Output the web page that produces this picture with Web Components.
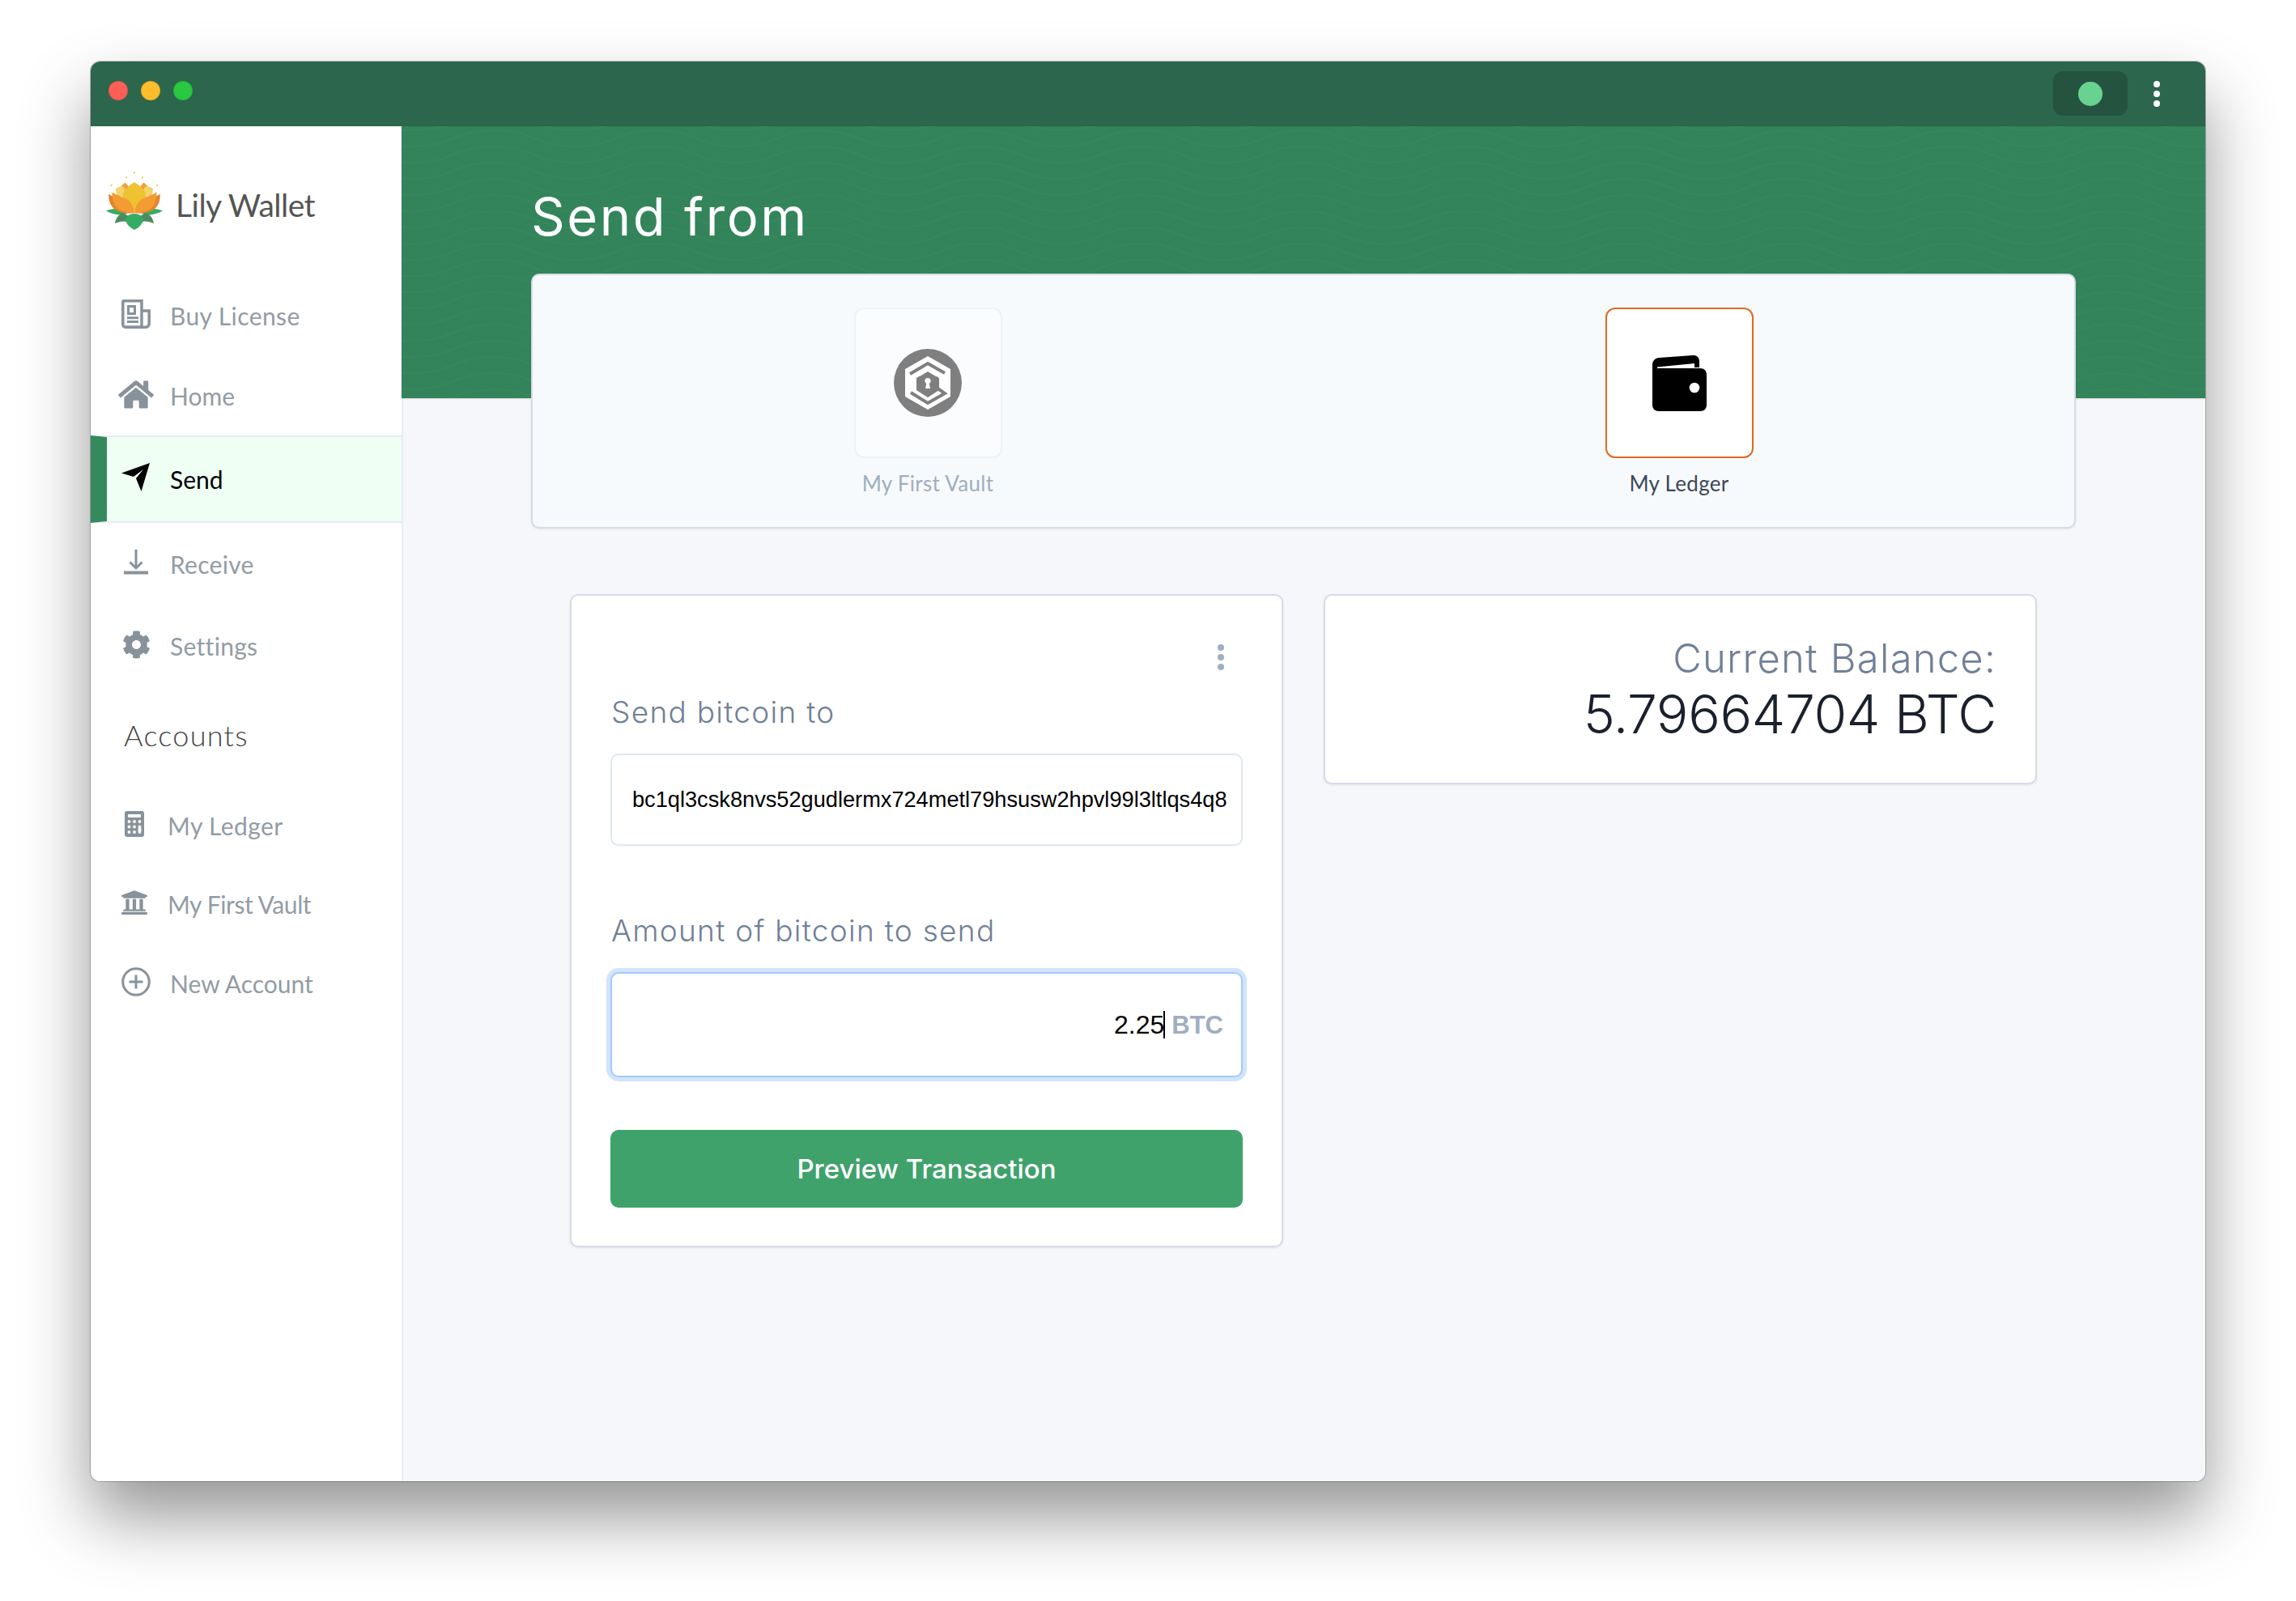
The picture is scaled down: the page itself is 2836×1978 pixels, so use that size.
<!DOCTYPE html>
<html lang="en"><head><meta charset="utf-8"><title>Lily Wallet</title>
<style>
html,body{margin:0;padding:0;background:#fff}
body{width:2836px;height:1978px;overflow:hidden;font-family:"Lato","Noto Sans",sans-serif}
svg{display:block}
</style></head><body>

<lw-window>
  <lw-sidebar slot="side">
    <lw-logo></lw-logo>
    <lw-nav-item h="100" ls=".4"><svg slot="icon" width="36" height="36" viewBox="0 0 36 36" fill="none" stroke="#87929b" stroke-width="3.500"><path d="M3 1.800H25V34.200H5A3.200 3.200 0 0 1 1.800 31V3A1.200 1.200 0 0 1 3 1.800Z"/><path d="M25 14H34.200V30A4.200 4.200 0 0 1 30 34.200H5"/><rect x="8.500" y="8.500" width="8" height="9" stroke-width="3"/><path d="M7 22.800H21M7 27.500H21" stroke-width="3"/></svg>Buy License</lw-nav-item>
    <lw-nav-item h="98"><svg slot="icon" width="44" height="39" viewBox="0 0 576 512" fill="#87929b" style="margin-left:-4px;margin-right:-4px"><path d="M280.370 148.260L96 300.110V464a16 16 0 0 0 16 16l112.060-.29a16 16 0 0 0 15.920-16V368a16 16 0 0 1 16-16h64a16 16 0 0 1 16 16v95.640a16 16 0 0 0 16 16.050L464 480a16 16 0 0 0 16-16V300L295.670 148.260a12.190 12.190 0 0 0-15.300 0zM571.600 251.470L488 182.560V44.050a12 12 0 0 0-12-12h-56a12 12 0 0 0-12 12v72.610L318.470 43a48 48 0 0 0-61 0L4.340 251.470a12 12 0 0 0-1.600 16.900l25.500 31A12 12 0 0 0 45.150 301l235.220-193.740a12.190 12.190 0 0 1 15.300 0L530.900 301a12 12 0 0 0 16.900-1.600l25.500-31a12 12 0 0 0-1.700-16.930z"/></svg>Home</lw-nav-item>
    <lw-nav-item h="108" active><svg slot="icon" width="36" height="36" viewBox="0 0 36 36" fill="#000" style="margin-left:-1px"><path d="M0 12.500L35 0L24.500 35L18 19L27 8L15 17Z"/></svg>Send</lw-nav-item>
    <lw-nav-item h="102" ls=".3"><svg slot="icon" width="36" height="32" viewBox="0 0 36 32" fill="none" stroke="#87929b" stroke-width="3"><path d="M18 0V22M10.500 15.500L18 23L25.500 15.500"/><path d="M3 28.500H33" stroke-width="4"/></svg>Receive</lw-nav-item>
    <lw-nav-item h="100" ls=".3"><svg slot="icon" width="35" height="35" viewBox="0 0 512 512" fill="#87929b"><path d="M487.400 315.700l-42.600-24.600c4.300-23.200 4.300-47 0-70.200l42.600-24.600c4.900-2.800 7.100-8.600 5.500-14-11.100-35.600-30-67.800-54.700-94.600-3.800-4.100-10-5.100-14.800-2.300L380.800 110c-17.900-15.400-38.500-27.300-60.800-35.100V25.800c0-5.600-3.900-10.500-9.400-11.700-36.700-8.200-74.300-7.800-109.200 0-5.500 1.200-9.400 6.100-9.400 11.700V75c-22.200 7.900-42.800 19.800-60.800 35.100L88.700 85.500c-4.900-2.800-11-1.900-14.800 2.300-24.700 26.700-43.600 58.900-54.700 94.600-1.700 5.400.6 11.200 5.500 14L67.300 221c-4.300 23.200-4.300 47 0 70.200l-42.600 24.600c-4.900 2.800-7.100 8.600-5.500 14 11.100 35.600 30 67.800 54.700 94.600 3.800 4.100 10 5.100 14.800 2.300l42.600-24.600c17.900 15.400 38.500 27.300 60.800 35.100v49.200c0 5.600 3.900 10.500 9.400 11.700 36.700 8.200 74.300 7.800 109.200 0 5.500-1.200 9.400-6.100 9.400-11.700v-49.200c22.200-7.900 42.800-19.800 60.800-35.100l42.600 24.600c4.900 2.800 11 1.900 14.800-2.300 24.700-26.700 43.600-58.900 54.700-94.600 1.500-5.500-.7-11.300-5.600-14.100zM256 336c-44.100 0-80-35.900-80-80s35.900-80 80-80 80 35.900 80 80-35.900 80-80 80z"/></svg>Settings</lw-nav-item>
    <lw-nav-heading>Accounts</lw-nav-heading>
    <lw-nav-item h="96" w="32" g="25" ls=".4"><svg slot="icon" width="32" height="32" viewBox="0 0 32 32" fill="#87929b"><rect x="4" y="0" width="24" height="32" rx="3"/><g fill="#fff"><rect x="8" y="4" width="16" height="4" rx="1"/><circle cx="9.500" cy="13" r="1.900"/><circle cx="16" cy="13" r="1.900"/><circle cx="22.500" cy="13" r="1.900"/><circle cx="9.500" cy="19.500" r="1.900"/><circle cx="16" cy="19.500" r="1.900"/><circle cx="9.500" cy="26" r="1.900"/><circle cx="16" cy="26" r="1.900"/><rect x="20.600" y="17.500" width="3.800" height="10.500" rx="1.900"/></g></svg>My Ledger</lw-nav-item>
    <lw-nav-item h="98" w="32" g="25" ls="-.4"><svg slot="icon" width="34" height="34" viewBox="0 0 512 512" fill="#87929b" style="margin-left:-1px;margin-right:-1px"><path d="M496 128v16a8 8 0 0 1-8 8h-24v12c0 6.627-5.373 12-12 12H60c-6.627 0-12-5.373-12-12v-12H24a8 8 0 0 1-8-8v-16a8 8 0 0 1 4.941-7.392l232-88a7.996 7.996 0 0 1 6.118 0l232 88A8 8 0 0 1 496 128zm-24 304H40c-13.255 0-24 10.745-24 24v16a8 8 0 0 0 8 8h464a8 8 0 0 0 8-8v-16c0-13.255-10.745-24-24-24zM96 192v192H60c-6.627 0-12 5.373-12 12v20h416v-20c0-6.627-5.373-12-12-12h-36V192h-64v192h-64V192h-64v192h-64V192H96z"/></svg>My First Vault</lw-nav-item>
    <lw-nav-item h="98"><svg slot="icon" width="36" height="36" viewBox="0 0 36 36" fill="none" stroke="#87929b" stroke-width="3"><circle cx="18" cy="18" r="16.300"/><path d="M18 9.500V26.500M9.500 18H26.500"/></svg>New Account</lw-nav-item>
  </lw-sidebar>

  <lw-band heading="Send from">
    <lw-picker>
      <lw-tile label="My First Vault"><svg width="84" height="84" viewBox="8 8 84 84"><circle cx="50" cy="50" r="42" fill="#7f7f7f"/><path d="M50 17L78 33V67L50 83L22 67V33Z" fill="#fff"/><g fill="none" stroke="#7f7f7f" stroke-width="4"><path d="M28 39L50 26L71 38"/><path d="M29 62L50 75L71 63L58 54"/></g><path d="M36 44L50 35L64 44V59L50 68L36 59Z" fill="#7f7f7f"/><path d="M33 41L50 31L66 41L60 42L50 36L40 42Z" fill="#fff"/><circle cx="50" cy="47.500" r="3.600" fill="#fff"/><path d="M48.700 49H51.300L53 57H47Z" fill="#fff"/></svg></lw-tile>
      <lw-tile label="My Ledger" active><svg width="67" height="69" viewBox="0 0 67 69"><path fill="#000" d="M0 12C0 6 4 3.500 8 3L50 0C55-.4 58 3 58 7V15H52V10L6 14.500V16H59C64 16 67 19 67 24V61C67 66 64 69 59 69H8C3 69 0 66 0 61Z"/><circle cx="52" cy="40" r="6.300" fill="#fff"/></svg></lw-tile>
    </lw-picker>
  </lw-band>

  <lw-content>
    <lw-card class="form">
      <lw-kebab></lw-kebab>
      <lw-field label="Send bitcoin to"><lw-input kind="address">bc1ql3csk8nvs52gudlermx724metl79hsusw2hpvl99l3ltlqs4q8</lw-input></lw-field>
      <lw-field label="Amount of bitcoin to send" second><lw-input kind="amount" unit="BTC">2.25</lw-input></lw-field>
      <lw-button>Preview Transaction</lw-button>
    </lw-card>
    <lw-balance label="Current Balance:" value="5.79664704 BTC"></lw-balance>
  </lw-content>
</lw-window>

<script>
function def(name, css, html){
  customElements.define(name, class extends HTMLElement{
    constructor(){super();const r=this.attachShadow({mode:'open'});
      r.innerHTML='<style>'+css+'</style>'+(typeof html==='function'?html(this):html);}
  });
}
const WAVE = "data:image/svg+xml;utf8,"+encodeURIComponent('<svg xmlns="http://www.w3.org/2000/svg" width="200" height="20"><g fill="none" stroke="#36885c" stroke-width="2"><path d="M-86 5C-36 5-36 25 14 25C64 25 64 5 114 5C164 5 164 25 214 25"/><path d="M-86 -15C-36 -15-36 5 14 5C64 5 64 -15 114 -15C164 -15 164 5 214 5"/></g></svg>');
const TITLE='"Inter","Noto Sans",sans-serif';
const BODY='"Lato","Noto Sans",sans-serif';
const ARIAL='"Liberation Sans",Arial,sans-serif';

def('lw-window',`
:host{display:flex;flex-direction:column;box-sizing:border-box;width:2612px;height:1754px;margin:76px 0 0 112px;border-radius:12px;overflow:hidden;background:#fff;box-shadow:0 0 0 1px rgba(0,0,0,.22),0 44px 84px rgba(0,0,0,.42)}
.bar{flex:none;height:80px;background:#2c664d;display:flex;align-items:center;padding:0 56px 0 22px}
.lights{display:flex;gap:16px;margin-bottom:8px}
.l{width:24px;height:24px;border-radius:50%;box-sizing:border-box;border:1px solid rgba(0,0,0,.1)}
.sp{flex:1}
.pill{width:92px;height:55px;border-radius:12px;background:#24543f;display:flex;align-items:center;justify-content:center;margin-top:-1px}
.pill i{width:30px;height:30px;border-radius:50%;background:#68d391}
.dots{margin-left:32px;width:8px;display:flex;flex-direction:column;gap:4px}
.dots i{width:8px;height:8px;border-radius:50%;background:#fff}
.body{flex:1;display:flex;min-height:0}
.side{flex:none;width:384px}
.main{flex:1;min-width:0;background:linear-gradient(to right,#e8ebf3 2px,#f5f7fb 2px)}
`,`<div class="bar"><div class="lights"><span class="l" style="background:#ff5f57"></span><span class="l" style="background:#ffbd2e"></span><span class="l" style="background:#28c940"></span></div><div class="sp"></div><div class="pill"><i></i></div><div class="dots"><i></i><i></i><i></i></div></div>
<div class="body"><div class="side"><slot name="side"></slot></div><div class="main"><slot></slot></div></div>`);

def('lw-sidebar',`:host{display:block;background:#fff;height:100%}`,`<slot></slot>`);

def('lw-logo',`
:host{display:flex;align-items:center;height:184px;box-sizing:border-box;padding:0 0 0 18px;gap:15px}
span{font:400 39px/1 ${BODY};color:#555;letter-spacing:-.5px;margin-top:10px}
`,`<svg width="72" height="72" viewBox="0 0 72 72">
<g fill="#f0c040"><circle cx="36" cy="1.500" r="1.100"/><circle cx="26" cy="7.300" r="1.100"/><circle cx="45.800" cy="7.300" r="1.100"/><circle cx="7.700" cy="17" r="1.100"/><circle cx="64" cy="17" r="1.100"/></g>
<g><path d="M1 48.500C8 46 14 45 20 46.500L27 52C18 55 9 53 1 48.500Z" fill="#33ad63"/><path d="M12 64C13 58 16 53 22 51L29 55L26.500 62C21 61 17 62 12 64Z" fill="#4f8a60"/>
<path d="M19.500 18L24.500 13.500L31 21L23 25Z" fill="#f2a03a"/><path d="M13 21C17 18 20 18 23 19L27 27L16 32C14 28 13 25 13 21Z" fill="#f3d36a"/></g>
<g transform="matrix(-1 0 0 1 72 0)"><path d="M1 48.500C8 46 14 45 20 46.500L27 52C18 55 9 53 1 48.500Z" fill="#33ad63"/><path d="M12 64C13 58 16 53 22 51L29 55L26.500 62C21 61 17 62 12 64Z" fill="#4f8a60"/>
<path d="M19.500 18L24.500 13.500L31 21L23 25Z" fill="#f2a03a"/><path d="M13 21C17 18 20 18 23 19L27 27L16 32C14 28 13 25 13 21Z" fill="#f3d36a"/></g>
<path d="M36 13C44 18 51 24 51 33C51 42 43 47 36 51C29 47 21 42 21 33C21 24 28 18 36 13Z" fill="#efc232"/>
<path d="M4.300 28C9 30 13 33 14 36C20 38 30 44 36 51C26 53 14 50 9 44C5 39 4 33 4.300 28Z" fill="#e5842c"/>
<path d="M67.700 28C63 30 59 33 58 36C52 38 42 44 36 51C46 53 58 50 63 44C67 39 68 33 67.700 28Z" fill="#e5842c"/>
<path d="M8.300 25.500C15 29 21 31 27 34C32 37 35 44 36 51C29 51 20 50 15 45C10 40 8.500 32 8.300 25.500Z" fill="#f39c34"/>
<path d="M63.700 25.500C57 29 51 31 45 34C40 37 37 44 36 51C43 51 52 50 57 45C62 40 63.500 32 63.700 25.500Z" fill="#f39c34"/>
<path d="M36 72C30 69 25 64 25 58C27 54 32 52 36 52C40 52 45 54 47 58C47 64 42 69 36 72Z" fill="#33ad63"/>
</svg><span>Lily Wallet</span>`);

def('lw-nav-item',`
:host{display:flex;box-sizing:border-box;align-items:center;padding-left:38px;font:400 30px/1 ${BODY};color:#929ca5}
:host([active]){color:#000;background:#f0fff4;border-top:2px solid #e8ebf3;border-bottom:2px solid #e8ebf3;border-left:20px solid #348a5c;padding-left:18px}
.i{flex:none;display:flex;justify-content:center;align-items:center;margin-top:-4px}
span{margin-top:-1px}
`,el=>{const w=el.getAttribute('w')||36,g=el.getAttribute('g')||24;
 el.style.height=(el.getAttribute('h')||100)+'px';
 if(el.getAttribute('ls')) el.style.letterSpacing=el.getAttribute('ls')+'px';
 return `<div class="i" style="width:${w}px;margin-right:${g}px"><slot name="icon"></slot></div><span><slot></slot></span>`});

def('lw-nav-heading',`:host{display:flex;align-items:center;height:120px;margin-bottom:4px;padding-left:41px;font:300 36px/1 ${BODY};color:#444;letter-spacing:1.3px}`,`<slot></slot>`);

def('lw-band',`
:host{display:flow-root;box-sizing:border-box;padding:0 160px;background-color:#33845a;background-image:url('${WAVE}');box-shadow:0 1px 2px rgba(0,0,0,.1)}
h1{margin:0;height:182px;box-sizing:border-box;padding-top:71px;font:400 65px/1.25 ${TITLE};color:#fff;letter-spacing:2.6px}
`,el=>`<h1>${el.getAttribute('heading')}</h1><slot></slot>`);

def('lw-picker',`
:host{display:grid;grid-template-columns:1fr 1fr;box-sizing:border-box;height:315px;margin-bottom:-161px;padding:0 24px;background:#f7fafc;border:2px solid #d5dce6;border-radius:10px;box-shadow:0 1px 3px rgba(0,0,0,.08)}
`,`<slot></slot>`);

def('lw-tile',`
:host{display:flex;flex-direction:column;align-items:center;padding-top:40px}
.t{box-sizing:border-box;width:183px;height:186px;border:2px solid #eff2f6;border-radius:12px;background:#fbfcfe;display:flex;align-items:center;justify-content:center}
:host([active]) .t{background:#fff;border-color:#dd6b20}
.n{margin-top:16px;font:400 26px/30px ${BODY};letter-spacing:.3px;color:#a0aec0}
:host([active]) .n{color:#3d4758}
`,el=>`<div class="t"><slot></slot></div><div class="n">${el.getAttribute('label')}</div>`);

def('lw-content',`:host{display:flex;gap:50px;align-items:flex-start;padding:242px 0 0 208px}
`,`<slot></slot>`);

def('lw-card',`
:host{display:block;box-sizing:border-box;width:881px;height:807px;padding:0 48px;background:#fff;border:2px solid #d5dce6;border-radius:10px;box-shadow:0 1px 3px rgba(0,0,0,.08)}
`,`<slot></slot>`);

def('lw-kebab',`
:host{display:flex;flex-direction:column;align-items:flex-end;gap:4px;padding:60px 23px 0 0;height:32px}
i{width:8px;height:8px;border-radius:50%;background:#a0aec0}
`,`<i></i><i></i><i></i>`);

def('lw-field',`
:host{display:block;padding-top:30px}
:host([second]){padding-top:83px}
label{display:block;font:300 37px/44px ${TITLE};color:#718096;margin-bottom:29px;letter-spacing:1.3px;margin-left:1px}
`,el=>`<label>${el.getAttribute('label')}</label><slot></slot>`);

def('lw-input',`
:host{display:flex;align-items:center;box-sizing:border-box;height:114px;padding:0 0 0 25px;border:2px solid #e2e8f0;border-radius:10px;background:#fff;font:400 27.2px/1 ${ARIAL};color:#000;white-space:nowrap;overflow:hidden;box-shadow:0 1px 2px rgba(0,0,0,.04)}
:host([kind=amount]){height:130px;justify-content:flex-end;padding:0 22px 0 0;font-size:32px;border-color:#a3c9fb;box-shadow:0 0 0 5px #d2e4fc;overflow:visible}
.c{display:inline-block;width:2px;height:34px;background:#000;margin:0 8px 0 -1px}
b{color:#a0aec0;font-weight:700;font-size:31px}
`,el=>el.getAttribute('kind')==='amount'?`<slot></slot><span class="c"></span><b>${el.getAttribute('unit')}</b>`:`<slot></slot>`);

def('lw-button',`
:host{display:flex;align-items:center;justify-content:center;box-sizing:border-box;height:96px;margin-top:65px;border-radius:10px;background:#3fa26b;color:#fff;font:500 33px/1 ${TITLE}}
`,`<slot></slot>`);

def('lw-balance',`
:host{display:block;box-sizing:border-box;width:881px;height:235px;padding:46px 48px 0 0;text-align:right;background:#fff;border:2px solid #d5dce6;border-radius:10px;box-shadow:0 1px 3px rgba(0,0,0,.08)}
.a{font:300 49px/64px ${TITLE};color:#718096;letter-spacing:1.2px}
.b{font:300 66px/72px ${TITLE};color:#1a202c;letter-spacing:-.4px}
`,el=>`<div class="a">${el.getAttribute('label')}</div><div class="b">${el.getAttribute('value')}</div>`);
</script>
</body></html>
